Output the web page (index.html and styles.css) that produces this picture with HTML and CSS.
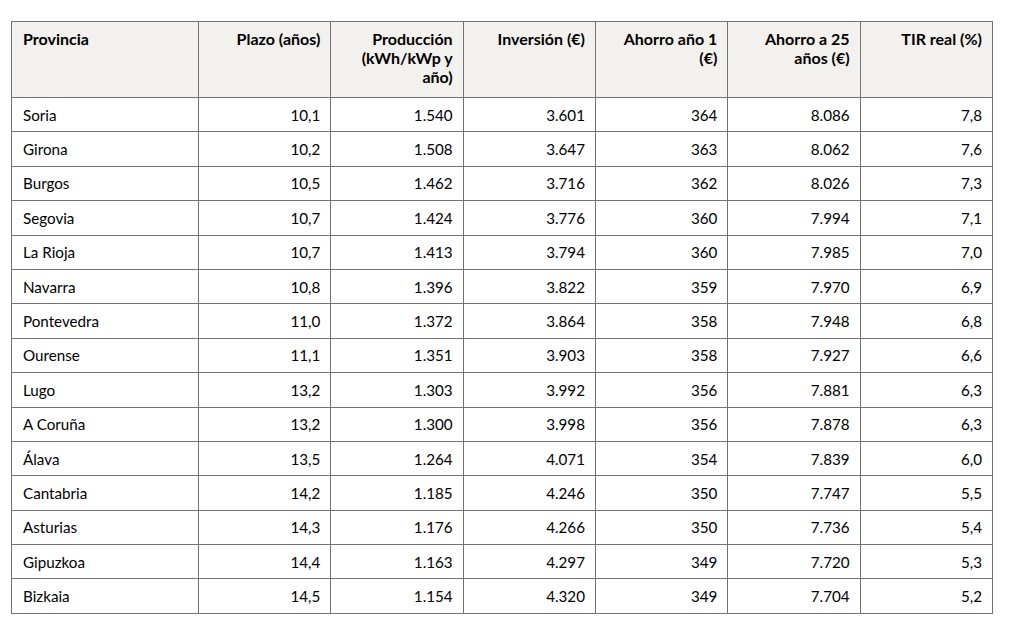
FILE: index.html
```html
<!DOCTYPE html>
<html lang="es">
<head>
<meta charset="utf-8">
<title>Rentabilidad por provincia</title>
<link rel="stylesheet" href="styles.css">
</head>
<body>
<table class="data">
  <colgroup>
    <col class="c-prov">
    <col class="c-num"><col class="c-num"><col class="c-num"><col class="c-num"><col class="c-num"><col class="c-num">
  </colgroup>
  <thead>
    <tr>
      <th class="left">Provincia</th>
      <th>Plazo (años)</th>
      <th>Producción (kWh/kWp y año)</th>
      <th>Inversión (€)</th>
      <th>Ahorro año 1 (€)</th>
      <th>Ahorro a 25 años (€)</th>
      <th>TIR real (%)</th>
    </tr>
  </thead>
  <tbody>
    <tr><td class="left">Soria</td><td>10,1</td><td>1.540</td><td>3.601</td><td>364</td><td>8.086</td><td>7,8</td></tr>
    <tr><td class="left">Girona</td><td>10,2</td><td>1.508</td><td>3.647</td><td>363</td><td>8.062</td><td>7,6</td></tr>
    <tr><td class="left">Burgos</td><td>10,5</td><td>1.462</td><td>3.716</td><td>362</td><td>8.026</td><td>7,3</td></tr>
    <tr><td class="left">Segovia</td><td>10,7</td><td>1.424</td><td>3.776</td><td>360</td><td>7.994</td><td>7,1</td></tr>
    <tr><td class="left">La Rioja</td><td>10,7</td><td>1.413</td><td>3.794</td><td>360</td><td>7.985</td><td>7,0</td></tr>
    <tr><td class="left">Navarra</td><td>10,8</td><td>1.396</td><td>3.822</td><td>359</td><td>7.970</td><td>6,9</td></tr>
    <tr><td class="left">Pontevedra</td><td>11,0</td><td>1.372</td><td>3.864</td><td>358</td><td>7.948</td><td>6,8</td></tr>
    <tr><td class="left">Ourense</td><td>11,1</td><td>1.351</td><td>3.903</td><td>358</td><td>7.927</td><td>6,6</td></tr>
    <tr><td class="left">Lugo</td><td>13,2</td><td>1.303</td><td>3.992</td><td>356</td><td>7.881</td><td>6,3</td></tr>
    <tr><td class="left">A Coruña</td><td>13,2</td><td>1.300</td><td>3.998</td><td>356</td><td>7.878</td><td>6,3</td></tr>
    <tr><td class="left">Álava</td><td>13,5</td><td>1.264</td><td>4.071</td><td>354</td><td>7.839</td><td>6,0</td></tr>
    <tr><td class="left">Cantabria</td><td>14,2</td><td>1.185</td><td>4.246</td><td>350</td><td>7.747</td><td>5,5</td></tr>
    <tr><td class="left">Asturias</td><td>14,3</td><td>1.176</td><td>4.266</td><td>350</td><td>7.736</td><td>5,4</td></tr>
    <tr><td class="left">Gipuzkoa</td><td>14,4</td><td>1.163</td><td>4.297</td><td>349</td><td>7.720</td><td>5,3</td></tr>
    <tr><td class="left">Bizkaia</td><td>14,5</td><td>1.154</td><td>4.320</td><td>349</td><td>7.704</td><td>5,2</td></tr>
  </tbody>
</table>
</body>
</html>
```
FILE: styles.css
```css
html, body {
  margin: 0;
  padding: 0;
  background: #ffffff;
}
body {
  padding: 21px 0 0 11px;
  font-family: Lato, "Liberation Sans", sans-serif;
  color: #000000;
}
.data {
  border-collapse: collapse;
  table-layout: fixed;
  width: 981px;
}
.c-prov { width: 187px; }
.c-num { width: 132.33px; }
.data th,
.data td {
  border: 1px solid #737373;
  text-align: right;
  padding: 0 10px 0 11px;
}
.data th {
  background: #f2f1ee;
  font-weight: bold;
  font-size: 16px;
  vertical-align: top;
  height: 76px;
  box-sizing: border-box;
  padding-top: 7px;
  line-height: 19px;
  color: #000000;
}
.data td {
  font-size: 15.2px;
  height: 34.4px;
  box-sizing: border-box;
  line-height: 18px;
  vertical-align: middle;
}
.data .left { text-align: left; }
```
